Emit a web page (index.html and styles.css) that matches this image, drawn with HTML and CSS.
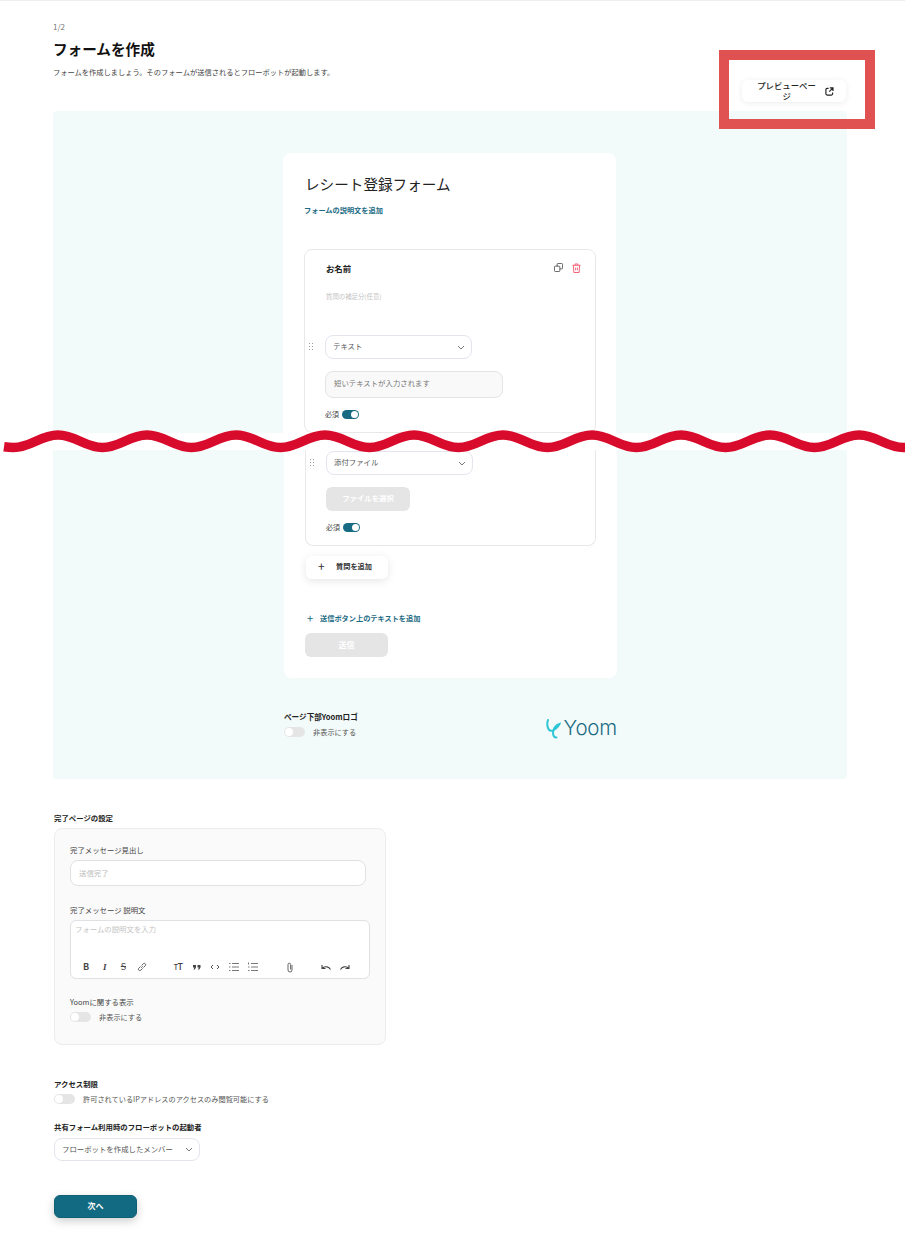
FILE: index.html
```html
<!DOCTYPE html>
<html lang="ja">
<head>
    <meta charset="UTF-8">
    <meta name="viewport" content="width=device-width, initial-scale=1.0">
    <title>フォームを作成</title>
    <link rel="stylesheet" href="styles.css">
</head>
<body>

<div class="page">
    <div class="head">
        <div>
            <div class="step">1/2</div>
            <h1>フォームを作成</h1>
            <p class="lead">フォームを作成しましょう。そのフォームが送信されるとフローボットが起動します。</p>
        </div>
        <button type="button" class="preview">
            <span class="preview-text">プレビューページ</span>
            <svg width="9" height="9" viewBox="0 0 10 10" fill="none" stroke="#222" stroke-width="1.3"><path d="M4 1.4H2.4A1.4 1.4 0 0 0 1 2.8v4.8A1.4 1.4 0 0 0 2.4 9h4.8A1.4 1.4 0 0 0 8.600 7.600V6"/><path d="M5.500 1H9v3.500M9 1 4.800 5.200"/></svg>
        </button>
    </div>

    <div class="panel panel-top">
        <div class="card card-top">
            <h2 class="form-title">レシート登録フォーム</h2>
            <div class="link-text">フォームの説明文を追加</div>

            <div class="field field-top">
                <div class="field-head">
                    <span class="field-name">お名前</span>
                    <span class="field-icons">
                        <svg width="9" height="9" viewBox="0 0 10 10" fill="none" stroke="#555" stroke-width="1"><rect x="3.500" y="0.500" width="6" height="6" rx="1"/><rect x="0.500" y="3.500" width="6" height="6" rx="1" fill="#fff"/></svg>
                        <svg width="9" height="10" viewBox="0 0 10 11" fill="none" stroke="#f0566c" stroke-width="1"><path d="M0.500 2.500h9M3.500 2.500V1h3v1.500M1.500 2.500l.6 8h5.800l.6-8M4 5v3M6 5v3"/></svg>
                    </span>
                </div>
                <div class="field-help">質問の補足分(任意)</div>
                <div class="type-row">
                    <span class="grip"></span>
                    <div class="select"><span class="select-text">テキスト</span><svg class="chev" width="8" height="5" viewBox="0 0 8 5" fill="none" stroke="#777"><path d="M1 1l3 3 3-3"/></svg></div>
                </div>
                <div class="text-sample">短いテキストが入力されます</div>
                <div class="required">必須<span class="toggle on"></span></div>
            </div>
        </div>
    </div>

    <div class="panel panel-bottom">
        <div class="card card-bottom">
            <div class="field field-bottom">
                <div class="type-row">
                    <span class="grip"></span>
                    <div class="select"><span class="select-text">添付ファイル</span><svg class="chev" width="8" height="5" viewBox="0 0 8 5" fill="none" stroke="#777"><path d="M1 1l3 3 3-3"/></svg></div>
                </div>
                <div class="file-btn">ファイルを選択</div>
                <div class="required">必須<span class="toggle on"></span></div>
            </div>
            <button type="button" class="add-question"><span class="plus">+</span>質問を追加</button>
            <div class="link-text add-text"><span class="plus-small">+</span>送信ボタン上のテキストを追加</div>
            <div class="send-btn">送信</div>
        </div>
        <div class="logo-row">
            <div>
                <div class="logo-title">ページ下部Yoomロゴ</div>
                <div class="switch-row"><span class="toggle"></span>非表示にする</div>
            </div>
            <div class="logo">
                <svg width="15" height="21" viewBox="0 0 15 21" fill="none" stroke="#2ec6d6" stroke-width="2" stroke-linecap="round"><path d="M2 2C0.500 6 1.500 12.500 5 12.800C8.500 13 12.500 8 13.500 6C10 7 7 10.500 7 14.500C7 17.500 8.500 19.500 10.500 19.500"/></svg>
                <span class="logo-text">Yoom</span>
            </div>
        </div>
    </div>

    <div class="section-title">完了ページの設定</div>
    <div class="done-box">
        <label class="done-label">完了メッセージ見出し</label>
        <div class="done-input">送信完了</div>
        <label class="done-label done-label-2">完了メッセージ 説明文</label>
        <div class="editor">
            <div class="editor-text">フォームの説明文を入力</div>
            <div class="toolbar">
                <div class="tool-group">
                    <span class="tool tool-b">B</span>
                    <span class="tool tool-i">I</span>
                    <span class="tool tool-s">S</span>
                    <svg class="tool" width="10" height="10" viewBox="0 0 10 10" fill="none" stroke="#555" stroke-width=".9"><path d="M4.200 5.800 5.800 4.200M3.500 4.500 1.800 6.200a1.400 1.400 0 0 0 2 2L5.500 6.500M4.500 3.500 6.200 1.800a1.400 1.400 0 0 1 2 2L6.500 5.500"/></svg>
                </div>
                <div class="tool-group group-2">
                    <span class="tool tool-t"><small>T</small>T</span>
                    <svg class="tool" width="10" height="10" viewBox="0 0 10 10" fill="#444"><path d="M1 3h3v2.500L2.800 7.500H1.500L2.400 5.500H1zM5.500 3h3v2.500L7.300 7.500H6L6.900 5.500H5.500z"/></svg>
                    <svg class="tool" width="10" height="10" viewBox="0 0 10 10" fill="none" stroke="#555"><path d="M3 3 1 5l2 2M7 3l2 2-2 2"/></svg>
                    <svg class="tool" width="10" height="10" viewBox="0 0 10 10" fill="none" stroke="#555" stroke-width=".8"><path d="M3 1.500h7M3 5h7M3 8.500h7M0 1.500h1.500M0 5h1.500M0 8.500h1.500"/></svg>
                    <svg class="tool" width="10" height="10" viewBox="0 0 10 10" fill="none" stroke="#555" stroke-width=".8"><path d="M3 1.500h7M3 5h7M3 8.500h7M.5 .5v2M0 5h1.500M0 8.500h1.500"/></svg>
                </div>
                <div class="tool-group group-3">
                    <svg class="tool" width="10" height="11" viewBox="0 0 10 11" fill="none" stroke="#555" stroke-width=".9"><path d="M7 3v5a2 2 0 0 1-4 0V2.500a1.300 1.300 0 0 1 2.600 0V7.500"/></svg>
                </div>
                <div class="tool-group group-4">
                    <svg class="tool" width="10" height="10" viewBox="0 0 10 10" fill="none" stroke="#444" stroke-width="1.100"><path d="M9.500 7.500C8 4.500 4.500 4 1.500 6M1 3v3.500h3.500"/></svg>
                    <svg class="tool" width="10" height="10" viewBox="0 0 10 10" fill="none" stroke="#444" stroke-width="1.100"><path d="M.5 7.500C2 4.500 5.500 4 8.500 6M9 3v3.500H5.500"/></svg>
                </div>
            </div>
        </div>
        <label class="done-label done-label-3">Yoomに関する表示</label>
        <div class="switch-row"><span class="toggle"></span>非表示にする</div>
    </div>

    <div class="section-title access-title">アクセス制限</div>
    <div class="switch-row"><span class="toggle"></span>許可されているIPアドレスのアクセスのみ閲覧可能にする</div>

    <div class="section-title starter-title">共有フォーム利用時のフローボットの起動者</div>
    <div class="select select-starter"><span class="select-text">フローボットを作成したメンバー</span><svg class="chev" width="8" height="5" viewBox="0 0 8 5" fill="none" stroke="#777"><path d="M1 1l3 3 3-3"/></svg></div>

    <button type="button" class="next">次へ</button>
</div>

<!-- overlays drawn on top of the capture -->
<div class="highlight"></div>
<svg class="wave" width="905" height="32" viewBox="0 0 905 32" fill="none" stroke="#d90b2c" stroke-width="9.500"><path d="M4 21.800Q9 22.500 13.500 22.500c18 0 26.500-12.500 44.500-12.500s26.500 12.500 44.500 12.500s26.500-12.500 44.500-12.500s26.500 12.500 44.500 12.500s26.500-12.500 44.500-12.500s26.500 12.500 44.500 12.500s26.500-12.500 44.500-12.500s26.500 12.500 44.500 12.500s26.500-12.500 44.500-12.500s26.500 12.500 44.500 12.500s26.500-12.500 44.500-12.500s26.500 12.500 44.500 12.500s26.500-12.500 44.500-12.500s26.500 12.500 44.500 12.500s26.500-12.500 44.500-12.500s26.500 12.500 44.500 12.500s26.500-12.500 44.500-12.500s26.500 12.500 44.500 12.500s26.500-12.500 44.500-12.500s26.500 12.500 44.500 12.500h3"/></svg>

</body>
</html>
```

FILE: styles.css
```css
* {
    box-sizing: border-box;
}

body {
    margin: 0;
    font-family: "Noto Sans CJK JP", "Noto Sans", sans-serif;
    color: #222;
    background-color: #fff;
    position: relative;
}

.page {
    height: 1259px;
    padding: 0 58px 0 53px;
    border-top: 1px solid #eee;
    overflow: hidden;
}

button {
    font-family: inherit;
    cursor: pointer;
}

.head {
    display: flex;
    justify-content: space-between;
    height: 110px;
}

.step {
    margin-top: 20px;
    font-size: 8px;
    line-height: 12px;
    color: #777;
}

h1 {
    margin: 5px 0 0;
    font-size: 14.6px;
    line-height: 22px;
    font-weight: 700;
    color: #111;
}

.lead {
    margin: 6px 0 0;
    font-size: 7.250px;
    line-height: 12px;
    color: #444;
}

.preview {
    display: flex;
    align-items: center;
    width: 104px;
    height: 22px;
    margin: 79px 1px 0 0;
    padding: 0 12px 0 14px;
    border: none;
    border-radius: 6px;
    background-color: #fff;
    box-shadow: 0 1px 6px rgba(0, 0, 0, 0.08);
    font-size: 8.400px;
    font-weight: 500;
    line-height: 11px;
    color: #222;
}

.preview-text {
    width: 62px;
    text-align: center;
    margin-right: 8px;
}

.panel {
    background-color: #f3fbfa;
}

.panel-top {
    height: 322px;
    padding: 42px 0 0 230px;
    border-radius: 4px 4px 0 0;
    overflow: hidden;
}

.panel-bottom {
    height: 329px;
    margin-top: 17px;
    padding: 0 0 0 231px;
    border-radius: 0 0 4px 4px;
}

.card {
    width: 333px;
    background-color: #fff;
    padding: 0 21px;
}

.card-top {
    height: 290px;
    padding-top: 21px;
    border-radius: 8px 8px 0 0;
}

.card-bottom {
    height: 228px;
    border-radius: 0 0 8px 8px;
}

.form-title {
    margin: 0 0 0 1px;
    font-size: 14.600px;
    line-height: 20px;
    font-weight: 400;
    color: #222;
}

.link-text {
    margin-top: 10px;
    font-size: 7.200px;
    line-height: 12px;
    font-weight: 700;
    color: #1b6b84;
}

.field {
    width: 292px;
    border: 1px solid #e8e8e8;
    border-radius: 8px;
    position: relative;
}

.field-top {
    height: 184px;
    margin-top: 33px;
    padding: 12px 14px 0 20px;
}

.field-bottom {
    width: 291px;
    height: 96px;
    padding: 1px 0 0 20px;
    border-top: none;
    border-radius: 0 0 8px 8px;
}

.field-head {
    display: flex;
    justify-content: space-between;
    align-items: center;
    padding-left: 1px;
    height: 12px;
}

.field-name {
    font-size: 8.400px;
    font-weight: 700;
}

.field-icons {
    display: flex;
    gap: 9px;
    margin-top: 0;
}

.field-help {
    margin: 18px 0 0 1px;
    font-size: 6.400px;
    line-height: 10px;
    color: #c4c4c4;
}

.type-row {
    position: relative;
}

.field-top .type-row {
    margin-top: 33px;
}

.grip {
    position: absolute;
    left: -17px;
    top: 7px;
    width: 6px;
    height: 9px;
    background-image: radial-gradient(circle, #999 0.7px, transparent 0.9px);
    background-size: 3px 3px;
}

.select {
    display: flex;
    align-items: center;
    justify-content: space-between;
    width: 147px;
    height: 24px;
    padding: 0 6px 0 7px;
    border: 1.500px solid #e2e6ec;
    border-radius: 8px;
    background-color: #fff;
    font-size: 7.400px;
    color: #555;
}

.select-text {
    position: relative;
    top: -1.500px;
}

.text-sample {
    width: 178px;
    height: 27px;
    margin-top: 12px;
    padding: 0 8px;
    border: 1.500px solid #e2e4e8;
    border-radius: 8px;
    background-color: #f9f9f9;
    font-size: 7.400px;
    line-height: 22px;
    color: #777;
}

.required {
    display: flex;
    align-items: center;
    gap: 3px;
    height: 10px;
    margin-top: 11px;
    font-size: 7px;
    color: #444;
}

.toggle {
    display: inline-block;
    flex: none;
    width: 21px;
    height: 10px;
    border-radius: 5px;
    background-color: #e5e5e5;
    position: relative;
}

.toggle::after {
    content: "";
    position: absolute;
    left: 1px;
    top: 1px;
    width: 8px;
    height: 8px;
    border-radius: 50%;
    background-color: #fff;
}

.toggle.on {
    width: 17px;
    height: 9px;
    margin-top: 1px;
    background-color: #166b83;
}

.toggle.on::after {
    left: auto;
    right: 1px;
    width: 7px;
    height: 7px;
}

.file-btn {
    width: 84px;
    height: 24px;
    margin-top: 12px;
    border-radius: 6px;
    background-color: #e5e5e5;
    font-size: 7.400px;
    font-weight: 700;
    line-height: 22px;
    text-align: center;
    color: #fff;
}

.field-bottom .required {
    margin-top: 11px;
}

.add-question {
    display: flex;
    align-items: center;
    width: 82px;
    height: 23px;
    margin: 10px 0 0 1px;
    padding: 0 0 3px 12px;
    border: none;
    border-radius: 6px;
    background-color: #fff;
    box-shadow: 0 2px 8px rgba(0, 0, 0, 0.1);
    font-size: 7.200px;
    font-weight: 700;
    color: #333;
}

.plus {
    width: 18px;
    font-size: 12px;
    font-weight: 400;
    line-height: 12px;
    text-align: left;
}

.add-text {
    display: flex;
    align-items: center;
    margin-top: 33px;
    margin-left: 2px;
}

.plus-small {
    width: 13px;
    font-size: 11px;
    font-weight: 400;
    line-height: 12px;
}

.send-btn {
    width: 83px;
    height: 24px;
    margin-top: 9px;
    border-radius: 6px;
    background-color: #e5e5e5;
    font-size: 8px;
    font-weight: 700;
    line-height: 24px;
    text-align: center;
    color: #fff;
}

.logo-row {
    display: flex;
    justify-content: space-between;
    width: 333px;
    margin-top: 33px;
}

.logo-title {
    font-size: 7.600px;
    font-weight: 700;
    line-height: 12px;
}

.switch-row {
    display: flex;
    align-items: center;
    gap: 8px;
    height: 11px;
    margin-top: 3px;
    font-size: 7.200px;
    color: #555;
}

.logo {
    display: flex;
    align-items: center;
    gap: 3px;
    margin-top: 5px;
    height: 24px;
}

.logo-text {
    font-family: "Inter", sans-serif;
    font-size: 20.500px;
    font-weight: 300;
    line-height: 24px;
    letter-spacing: -0.2px;
    color: #1b6b84;
}

.section-title {
    margin: 33px 0 0 1px;
    font-size: 7.400px;
    font-weight: 700;
    line-height: 12px;
}

.done-box {
    width: 332px;
    height: 217px;
    margin: 4px 0 0 1px;
    padding: 15px 15px 0 15px;
    border: 1px solid #ececec;
    border-radius: 8px;
    background-color: #fafafa;
}

.done-label {
    display: block;
    font-size: 7.400px;
    line-height: 12px;
    color: #444;
}

.done-input {
    width: 296px;
    height: 26px;
    margin-top: 4px;
    padding: 0 8px;
    border: 1.500px solid #dfe1e4;
    border-radius: 8px;
    background-color: #fff;
    font-size: 7.400px;
    line-height: 23px;
    color: #bbb;
}

.done-label-2 {
    margin-top: 18px;
}

.editor {
    width: 300px;
    height: 59px;
    margin-top: 4px;
    padding: 2px 5px 0 4px;
    border: 1.500px solid #dfe1e4;
    border-radius: 6px;
    background-color: #fff;
}

.editor-text {
    font-size: 7.400px;
    line-height: 12px;
    color: #c4c4c4;
}

.toolbar {
    display: flex;
    align-items: center;
    height: 12px;
    margin: 26px 0 0 6px;
}

.tool-group {
    display: flex;
    align-items: center;
    gap: 8.700px;
}

.group-2 {
    margin-left: 26px;
}

.group-3 {
    margin-left: 27px;
}

.group-4 {
    margin-left: 26px;
}

.tool {
    display: block;
    width: 10px;
    font-size: 9px;
    line-height: 12px;
    text-align: center;
    color: #444;
}

.tool-b {
    font-weight: 700;
}

.tool-i {
    font-style: italic;
    font-family: "Liberation Serif", serif;
    font-weight: 700;
}

.tool-s {
    text-decoration: line-through;
}

.tool-t {
    white-space: nowrap;
    font-weight: 500;
    letter-spacing: -0.5px;
}

.tool-t small {
    font-size: 7px;
}

.done-label-3 {
    margin-top: 17px;
}

.access-title {
    margin-top: 33px;
}

.access-title + .switch-row {
    margin-left: 1px;
}

.starter-title {
    margin-top: 17px;
}

.select-starter {
    width: 146px;
    height: 23px;
    margin: 5px 0 0 1px;
}

.next {
    display: block;
    width: 83px;
    height: 23px;
    margin: 34px 0 0 1px;
    padding-bottom: 3px;
    border: 1px solid #0f5f75;
    border-radius: 6px;
    background-color: #126a82;
    box-shadow: 0 3px 10px rgba(0, 0, 0, 0.2);
    font-size: 8px;
    font-weight: 700;
    color: #fff;
}

.highlight {
    position: absolute;
    left: 719px;
    top: 50px;
    width: 156px;
    height: 79px;
    border: 10px solid #e05252;
}

.wave {
    position: absolute;
    left: 0;
    top: 425px;
}
```
